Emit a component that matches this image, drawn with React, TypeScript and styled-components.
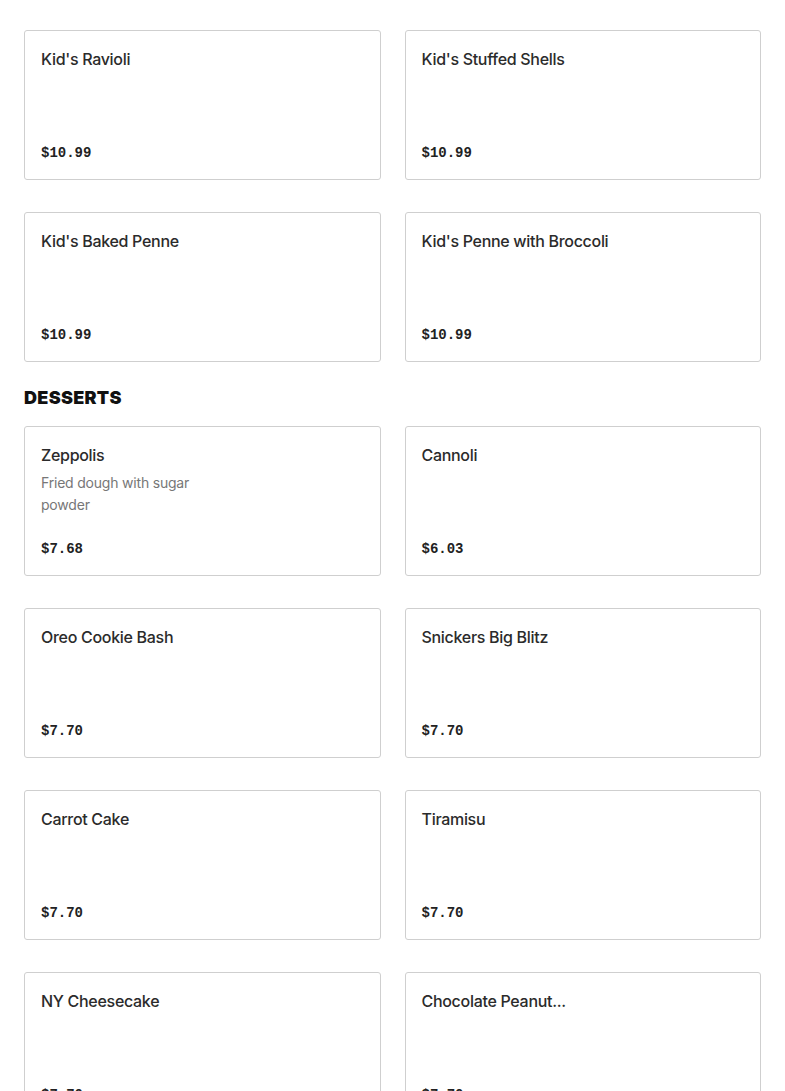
import styled, { createGlobalStyle } from "styled-components";

const GlobalStyle = createGlobalStyle`
  body {
    margin: 0;
    background: #ffffff;
    font-family: Inter, "Liberation Sans", sans-serif;
  }
`;

const Page = styled.div`
  padding: 30px 24px 40px;
  box-sizing: border-box;
  width: 100%;
`;

const Section = styled.section`
  display: flex;
  flex-direction: column;
`;

const SectionTitle = styled.h2`
  margin: 24px 0 16px;
  font-family: Inter, "Liberation Sans", sans-serif;
  font-size: 18px;
  line-height: 24px;
  font-weight: 900;
  letter-spacing: 0.3px;
  color: #111;
`;

const Grid = styled.div`
  display: grid;
  grid-template-columns: 1fr 1fr;
  column-gap: 24px;
  row-gap: 32px;
`;

const Card = styled.div`
  height: 150px;
  box-sizing: border-box;
  border: 1px solid #cfcfcf;
  border-radius: 3px;
  padding: 16px 16px 14px;
  display: flex;
  flex-direction: column;
  background: #fff;
`;

const ItemName = styled.div`
  font-size: 16px;
  line-height: 24px;
  font-weight: 500;
  letter-spacing: -0.3px;
  color: #2b2b2b;
`;

const ItemDesc = styled.div`
  margin-top: 5px;
  max-width: 170px;
  font-size: 14px;
  line-height: 22px;
  letter-spacing: -0.2px;
  color: #777;
`;

const Price = styled.div`
  margin-top: auto;
  font-family: "Liberation Mono", "DejaVu Sans Mono", monospace;
  font-weight: 700;
  font-size: 14px;
  line-height: 24px;
  color: #222;
`;

type Item = { name: string; desc?: string; price: string };

const kids: Item[] = [
  { name: "Kid's Ravioli", price: "$10.99" },
  { name: "Kid's Stuffed Shells", price: "$10.99" },
  { name: "Kid's Baked Penne", price: "$10.99" },
  { name: "Kid's Penne with Broccoli", price: "$10.99" },
];

const desserts: Item[] = [
  { name: "Zeppolis", desc: "Fried dough with sugar powder", price: "$7.68" },
  { name: "Cannoli", price: "$6.03" },
  { name: "Oreo Cookie Bash", price: "$7.70" },
  { name: "Snickers Big Blitz", price: "$7.70" },
  { name: "Carrot Cake", price: "$7.70" },
  { name: "Tiramisu", price: "$7.70" },
  { name: "NY Cheesecake", price: "$7.70" },
  { name: "Chocolate Peanut...", price: "$7.70" },
];

const MenuGrid = ({ items }: { items: Item[] }) => (
  <Grid>
    {items.map((item) => (
      <Card key={item.name}>
        <ItemName>{item.name}</ItemName>
        {item.desc && <ItemDesc>{item.desc}</ItemDesc>}
        <Price>{item.price}</Price>
      </Card>
    ))}
  </Grid>
);

const App = () => (
  <>
    <GlobalStyle />
    <Page>
      <Section>
        <MenuGrid items={kids} />
      </Section>
      <Section>
        <SectionTitle>DESSERTS</SectionTitle>
        <MenuGrid items={desserts} />
      </Section>
    </Page>
  </>
);

export default App;
